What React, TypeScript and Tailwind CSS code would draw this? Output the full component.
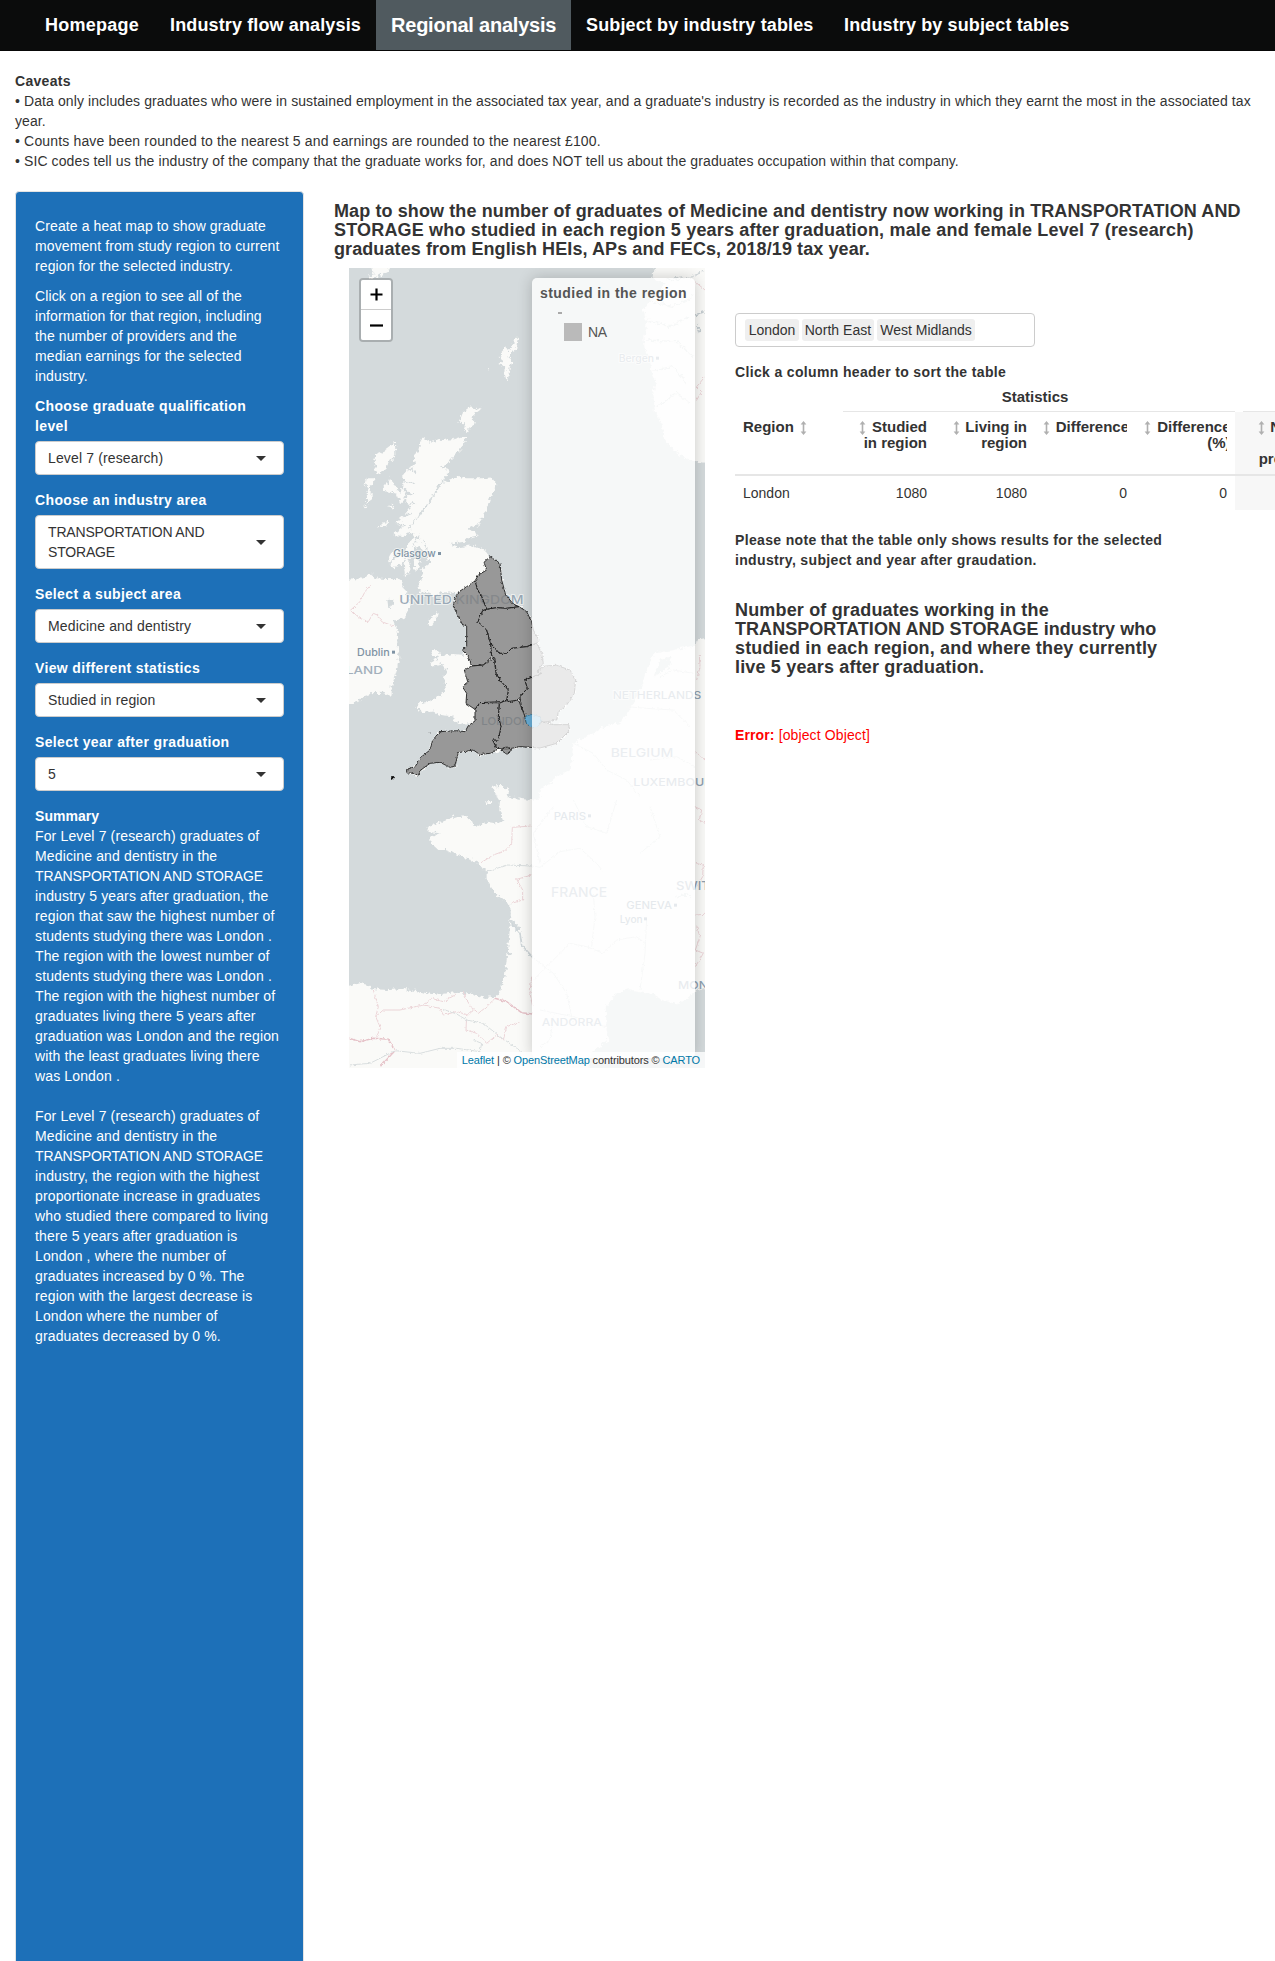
import React from "react";

const LAND =
  "M250,533 L262,540 275,546 300,540 340,538 362,530 380,530 375,552 355,575 335,595 320,612 300,622 330,630 318,650 308,668 330,660 350,650 380,655 430,655 455,652 466,668 464,690 450,715 440,745 430,770 415,792 385,808 405,815 412,830 385,836 372,845 330,852 355,862 400,856 435,872 450,890 480,910 485,960 497,1005 520,1032 540,1040 560,1055 575,1085 580,1110 597,1140 595,1155 605,1180 610,1210 590,1235 615,1218 650,1216 690,1230 707,1260 703,1300 680,1335 655,1355 650,1380 620,1386 640,1394 687,1394 685,1415 665,1435 650,1450 600,1464 540,1460 500,1470 460,1478 420,1488 400,1470 355,1478 345,1520 330,1522 300,1507 270,1510 240,1535 233,1548 215,1540 200,1538 200,1528 225,1520 245,1490 270,1470 278,1440 300,1415 350,1415 375,1412 385,1397 405,1385 390,1394 370,1393 345,1385 337,1369 300,1365 275,1352 250,1358 228,1345 240,1330 265,1325 300,1305 318,1290 312,1250 320,1230 302,1210 275,1218 270,1208 298,1192 276,1185 274,1172 290,1170 310,1188 335,1182 368,1184 378,1170 380,1155 380,1095 368,1095 350,1060 340,1038 345,1015 360,993 340,1000 305,995 275,1012 262,992 242,1000 235,975 250,950 245,930 270,910 262,890 240,865 228,860 212,880 208,905 208,940 195,948 192,920 200,895 178,915 160,925 150,912 190,880 205,850 225,830 213,815 190,828 160,825 190,800 165,790 195,765 212,745 195,715 212,702 190,680 190,640 205,625 225,615 220,590 235,575 240,550Z";
const IRELAND =
  "M-20,960 L50,958 75,950 92,940 108,955 135,957 180,958 190,980 212,1025 205,1055 190,1075 160,1082 170,1110 172,1150 178,1190 170,1230 155,1280 155,1307 130,1298 90,1300 50,1325 -20,1345Z";
const ISLES = [
  "M85,0 L155,0 148,35 130,40 115,52 86,57 84,48 104,42 94,34Z",
  "M535,232 L525,240 512,262 505,272 498,262 485,275 478,290 490,300 475,312 490,318 497,325 495,345 500,364 506,345 510,320 516,305 505,290 520,275 533,265 530,250Z",
  "M385,438 L380,455 368,460 360,480 355,488 375,490 372,508 385,517 390,500 405,490 398,480 400,465 420,450 424,440 400,447Z",
  "M165,546 L150,560 130,575 105,585 103,600 110,620 105,638 120,643 130,630 138,620 150,605 166,585Z",
  "M78,655 L103,655 97,675 87,682 95,692 95,722 82,728 80,700 85,690 75,668Z",
  "M73,740 L82,736 80,747Z",
  "M150,653 L160,665 172,690 180,695 190,685 197,705 190,728 180,728 170,702 150,697 130,692 128,675 145,672Z",
  "M145,733 L160,736 156,746Z",
  "M112,803 L130,788 146,782 140,795Z",
  "M146,895 L160,870 172,872 165,885 150,908Z",
  "M222,900 L232,896 240,915 236,930 222,928Z",
  "M293,1055 L290,1075 276,1095 263,1094 268,1078Z",
  "M442,325 L448,325 447,331 442,331Z",
  "M436,1626 L450,1622 450,1630 440,1632Z",
];
const NORWAY =
  "M960,0 L1140,0 1140,612 1060,605 1025,590 990,560 970,530 965,490 945,460 940,400 950,370 935,340 930,300 915,270 910,230 920,190 910,150 930,120 960,100 975,70 945,60 935,45Z";
const CONTINENT =
  "M1140,1130 L1070,1138 1065,1160 1000,1170 945,1180 930,1210 915,1250 900,1290 870,1350 840,1390 790,1400 760,1420 730,1435 700,1450 692,1530 650,1550 620,1575 595,1595 600,1615 575,1620 540,1616 505,1612 500,1582 480,1578 457,1580 466,1600 480,1622 478,1650 490,1685 465,1690 440,1685 405,1700 390,1680 372,1666 345,1670 300,1688 265,1700 262,1715 300,1720 270,1730 272,1748 295,1770 320,1770 345,1780 375,1795 410,1805 420,1820 440,1830 440,1860 465,1900 490,1920 510,1930 513,1965 505,1980 510,2000 505,2060 495,2140 480,2195 465,2210 440,2214 400,2205 360,2195 330,2198 290,2204 240,2195 190,2186 150,2190 100,2188 85,2175 60,2170 -20,2190 -20,2480 740,2480 750,2380 805,2340 800,2310 797,2240 830,2200 865,2188 930,2200 965,2220 1010,2233 1050,2210 1070,2190 1140,2172Z";
const PINK = [
  "M92,975 L75,995 60,1025 32,1050 60,1075 85,1085 100,1060 112,1065 125,1085 165,1100",
  "M575,1698 L517,1702 515,1750 495,1772 460,1785 420,1810",
  "M575,1845 L530,1858 548,1890 548,1920 515,1930",
  "M100,2190 L115,2240 107,2270 130,2250 180,2250 250,2235 275,2215 310,2225 345,2205",
  "M250,2235 L300,2245 310,2265 350,2255 385,2265 400,2250 380,2220 370,2195",
  "M380,2265 L378,2310 410,2320 440,2350 470,2325 490,2340 500,2300 540,2285",
  "M465,2215 L440,2240 415,2260 400,2245",
  "M107,2270 L120,2300 110,2330",
  "M575,2150 L570,2200 578,2240",
  "M1065,1640 L1085,1650 1078,1680 1095,1690 M1066,1810 L1090,1815 1088,1850 1070,1880 M1066,1965 L1095,1963 M1070,2000 L1080,2030 1066,2070 1090,2080 1066,2120",
  "M1078,1185 L1080,1220 1070,1260 M1066,1475 L1095,1500",
  "M1095,350 L1070,380 1085,395 1070,420 M1065,65 L1095,90",
];
const STRONG_PINK = [
  "M465,2215 L500,2225 520,2240 545,2258 578,2262",
  "M27,2335 L60,2345 100,2335 145,2338 165,2372 120,2420",
];
const RIVERS = [
  "M425,1830 L450,1832 500,1815 575,1818 600,1822 660,1775 720,1765 770,1810 790,1835",
  "M165,2372 L240,2380 300,2365 350,2365 420,2375 425,2350 400,2340",
  "M27,2415 L90,2410 165,2372",
  "M310,2248 L350,2262 380,2280 430,2290 480,2330 545,2375",
  "M600,1810 L580,1720 640,1640 M700,1620 L740,1700 800,1720 830,1620 M930,1640 L960,1730 900,1780",
  "M575,2090 L640,2140 680,2200 700,2290 M580,2160 L640,2100 690,2050 740,2060 790,2080 830,2040 890,2030 915,2050",
  "M760,1900 L765,1970 755,2060 M920,1975 L915,2080 900,2190",
  "M600,2250 L650,2260 700,2270 760,2290 800,2300 M640,2270 L630,2340 600,2360",
  "M700,1450 L760,1480 800,1530 860,1560 900,1610 M860,1340 L920,1345 1000,1350 1050,1400",
  "M960,1250 L1000,1230 1060,1240 M930,1500 L1010,1490 1065,1520",
];
const REGIONS = [
  "M450,890 L480,910 485,960 497,1005 520,1032 537,1040 500,1045 470,1043 440,1048 425,1010 413,990 405,963 415,945 440,930 432,907Z",
  "M405,963 L413,990 425,1010 440,1048 428,1052 414,1085 440,1110 452,1150 455,1190 430,1215 395,1218 385,1190 367,1170 380,1160 380,1095 368,1095 350,1060 340,1038 345,1015 360,993 380,980Z",
  "M428,1052 L440,1048 470,1043 500,1045 537,1040 560,1055 575,1085 580,1110 597,1140 590,1150 560,1160 515,1165 500,1180 478,1180 452,1150 440,1110 414,1085Z",
  "M452,1150 L478,1180 500,1180 515,1165 560,1160 590,1150 605,1180 610,1210 590,1235 605,1240 555,1260 562,1285 540,1310 535,1320 500,1325 505,1290 480,1260 468,1240 465,1195 455,1190Z",
  "M395,1218 L430,1215 462,1192 468,1240 480,1260 505,1290 500,1320 478,1330 420,1328 405,1348 378,1330 380,1300 367,1280 383,1265 373,1230Z",
  "M605,1240 L590,1235 615,1218 650,1216 690,1230 707,1260 703,1300 680,1335 655,1355 650,1380 605,1388 600,1370 560,1370 545,1345 540,1310 562,1285 555,1260Z",
  "M478,1330 L500,1320 510,1328 535,1318 545,1345 555,1370 560,1392 580,1402 600,1390 605,1385 640,1394 687,1394 685,1415 665,1435 650,1450 600,1464 540,1460 500,1468 470,1465 458,1440 475,1440 483,1400 475,1370Z",
  "M405,1348 L420,1328 478,1325 475,1370 483,1400 475,1440 458,1440 470,1465 460,1478 420,1484 400,1470 355,1478 345,1518 330,1522 300,1507 270,1510 240,1532 233,1548 215,1540 200,1538 200,1528 225,1520 245,1490 270,1470 278,1440 300,1415 350,1412 375,1415 385,1397 405,1383Z",
  "M482,1470 L500,1460 515,1470 500,1482Z",
];
const LONDON = "M555,1370 L575,1363 600,1370 606,1380 598,1390 590,1403 575,1402 560,1392Z";

type MapText = { t: string; x: number; y: number; w: number; s: number; c: string; dot?: number };
const PLACES: MapText[] = [
  { t: "Glasgow", x: 160, y: 892, w: 127, s: 29, c: "#7f93a4", dot: 298 },
  { t: "UNITED KINGDOM", x: 178, y: 1032, w: 373, s: 36, c: "#9aa9b7" },
  { t: "Dublin", x: 51, y: 1188, w: 98, s: 29, c: "#7f93a4", dot: 160 },
  { t: "IRELAND", x: -44, y: 1242, w: 173, s: 33, c: "#a3b0bc" },
  { t: "LONDON", x: 424, y: 1396, w: 147, s: 33, c: "#8296a8" },
  { t: "Bergen", x: 836, y: 306, w: 106, s: 29, c: "#8f9fae", dot: 952 },
  { t: "NETHERLANDS", x: 818, y: 1317, w: 266, s: 33, c: "#8fa0b0" },
  { t: "BELGIUM", x: 812, y: 1492, w: 188, s: 35, c: "#9aa9b7" },
  { t: "LUXEMBOURG", x: 880, y: 1578, w: 265, s: 33, c: "#8fa0b0" },
  { t: "PARIS", x: 641, y: 1679, w: 97, s: 31, c: "#8296a8", dot: 748 },
  { t: "FRANCE", x: 633, y: 1910, w: 168, s: 38, c: "#9aa9b7" },
  { t: "SWITZERLAND", x: 1008, y: 1889, w: 285, s: 35, c: "#8fa0b0" },
  { t: "GENEVA", x: 859, y: 1947, w: 137, s: 31, c: "#7f93a4", dot: 1006 },
  { t: "Lyon", x: 839, y: 1988, w: 69, s: 29, c: "#7f93a4", dot: 916 },
  { t: "MONACO", x: 1014, y: 2186, w: 170, s: 33, c: "#8fa0b0" },
  { t: "ANDORRA", x: 605, y: 2298, w: 181, s: 33, c: "#9aa9b7" },
];

function MapCanvas() {
  return (
    <svg className="block h-[800px] w-[356px]" viewBox="27 24 1068 2400">
      <defs>
        <filter id="coast" x="-20" y="0" width="1160" height="2480" filterUnits="userSpaceOnUse">
          <feTurbulence type="fractalNoise" baseFrequency="0.09" numOctaves={3} seed={4} result="n" />
          <feDisplacementMap in="SourceGraphic" in2="n" scale={20} xChannelSelector="R" yChannelSelector="G" />
        </filter>
        <filter id="edge" x="-20" y="0" width="1160" height="2480" filterUnits="userSpaceOnUse">
          <feTurbulence type="fractalNoise" baseFrequency="0.12" numOctaves={2} seed={8} result="n" />
          <feDisplacementMap in="SourceGraphic" in2="n" scale={10} xChannelSelector="R" yChannelSelector="G" />
        </filter>
      </defs>
      <rect x="27" y="24" width="1068" height="2400" fill="#d4dadc" />
      <g filter="url(#coast)">
        <g fill="#fafaf8">
          <path d={LAND} />
          <path d={IRELAND} />
          <path d={NORWAY} />
          <path d={CONTINENT} />
          {ISLES.map((d) => (
            <path key={d} d={d} />
          ))}
        </g>
        <g fill="#d4dadc">
          <path d="M142,1020 L160,1018 158,1038 145,1042Z" />
          <path d="M962,1200 L990,1190 995,1215 960,1240 940,1250Z" />
          <path d="M507,1978 L520,1982 540,2010 530,2010 512,1992Z" />
          <path d="M503,2078 L517,2080 508,2086Z" />
          <path d="M1000,1915 L1030,1900 1060,1908 1030,1908Z" />
        </g>
        <g fill="none" stroke="#d4dadc" strokeWidth={4}>
          <path d="M330,635 L300,675 275,715 235,770 205,805" />
          <path d="M205,625 L228,640 M192,665 L225,672 M195,700 L225,705 M200,735 L225,728 M190,770 L215,760 M165,790 L195,795 M250,840 L262,870 M240,825 L215,860" />
          <path d="M915,120 L1000,140 1060,110 M920,180 L990,200 1050,170 M920,240 L1010,245 1060,290 M940,330 L1000,320 1040,370 M950,440 L1010,400 1050,430 M980,60 L1060,50 1090,30" />
          <path d="M1065,165 L1095,155 M1070,195 L1080,220" stroke="#c5cdd1" />
        </g>
      </g>
      <g filter="url(#edge)" fill="none">
        <g stroke="#ecd5d8" strokeWidth={3}>
          {PINK.map((d) => (
            <path key={d} d={d} />
          ))}
        </g>
        <g stroke="#e6c3c9" strokeWidth={4.5}>
          {STRONG_PINK.map((d) => (
            <path key={d} d={d} />
          ))}
        </g>
        <g stroke="#d9dedf" strokeWidth={3}>
          {RIVERS.map((d) => (
            <path key={d} d={d} />
          ))}
          <path d="M515,1990 L540,2020 545,2055 578,2092" stroke="#cfd6d9" strokeWidth={5} />
        </g>
      </g>
      <g fontFamily="Inter, 'Open Sans', sans-serif" fontWeight={500}>
        {PLACES.map((p) => (
          <g key={p.t} fill={p.c}>
            <text
              x={p.x}
              y={p.y}
              fontSize={p.s}
              textLength={p.w}
              lengthAdjust="spacingAndGlyphs"
              stroke="#fafaf8"
              strokeWidth={5}
              strokeOpacity={0.8}
              paintOrder="stroke"
            >
              {p.t}
            </text>
            {p.dot && <rect x={p.dot - 4} y={p.y - 16} width={9} height={9} />}
          </g>
        ))}
      </g>
      <g filter="url(#edge)" stroke="#1a1a1a" strokeWidth={2.6} strokeLinejoin="round">
        {REGIONS.map((d) => (
          <path key={d} d={d} fill="#808080" fillOpacity={0.8} />
        ))}
        <path d={LONDON} fill="#69afd8" stroke="#3a718f" strokeWidth={2} />
        <path d="M150,1551 L162,1549 157,1557Z M268,1418 L270,1420" fill="#000" />
      </g>
    </svg>
  );
}

function SortArrow({ className = "mr-[1.5px]" }: { className?: string }) {
  return (
    <svg className={"inline-block h-[14px] w-[7px] align-[-3px] " + className} viewBox="0 0 7 14" fill="#b0b0b0">
      <path d="M3.5 0 L6.4 3.4 H4.3 V10.6 H6.4 L3.5 14 L.6 10.6 H2.7 V3.4 H.6Z" />
    </svg>
  );
}

function Field({ label, value, first = false }: { label: React.ReactNode; value: React.ReactNode; first?: boolean }) {
  return (
    <div className={first ? "mt-[10px] mb-[15px]" : "mb-[15px]"}>
      <div className="mb-[5px] font-bold tracking-[0.36px] whitespace-nowrap">{label}</div>
      <div className="flex items-center justify-between rounded-[4px] border border-[#ccc] bg-white py-[6px] pr-[17px] pl-3 text-[#333]">
        <div className="whitespace-nowrap">{value}</div>
        <svg className="h-[5px] w-[10px]" viewBox="0 0 10 5">
          <path d="M0 0H10L5 5Z" fill="#333" />
        </svg>
      </div>
    </div>
  );
}

function Lines({ rows }: { rows: string[] }) {
  return (
    <>
      {rows.map((r, i) => (
        <div
          key={i}
          className={
            r !== "" && r === r.toUpperCase()
              ? "min-h-5 whitespace-pre tracking-[-0.14px]"
              : "min-h-5 whitespace-pre"
          }
        >
          {r}
        </div>
      ))}
    </>
  );
}

const SUMMARY = [
  "For Level 7 (research) graduates of",
  "Medicine and dentistry in the",
  "TRANSPORTATION AND STORAGE",
  "industry 5 years after graduation, the",
  "region that saw the highest number of",
  "students studying there was London .",
  "The region with the lowest number of",
  "students studying there was London .",
  "The region with the highest number of",
  "graduates living there 5 years after",
  "graduation was London and the region",
  "with the least graduates living there",
  "was London .",
  "",
  "For Level 7 (research) graduates of",
  "Medicine and dentistry in the",
  "TRANSPORTATION AND STORAGE",
  "industry, the region with the highest",
  "proportionate increase in graduates",
  "who studied there compared to living",
  "there 5 years after graduation is",
  "London , where the number of",
  "graduates increased by 0 %. The",
  "region with the largest decrease is",
  "London where the number of",
  "graduates decreased by 0 %.",
];

function Sidebar() {
  return (
    <aside className="h-[1800px] w-[289px] shrink-0 rounded-[4px] border border-[#e3e3e3] bg-[#1d70b8] px-[19px] pt-[24px] text-white tracking-[0.14px]">
      <div className="tracking-[0.11px]">
        <Lines
          rows={[
            "Create a heat map to show graduate",
            "movement from study region to current",
            "region for the selected industry.",
          ]}
        />
        <div className="h-[10px]" />
        <Lines
          rows={[
            "Click on a region to see all of the",
            "information for that region, including",
            "the number of providers and the",
            "median earnings for the selected",
            "industry.",
          ]}
        />
      </div>
      <Field
        first
        label={
          <>
            Choose graduate qualification
            <br />
            level
          </>
        }
        value="Level 7 (research)"
      />
      <Field
        label="Choose an industry area"
        value={
          <div className="tracking-[-0.17px]">
            TRANSPORTATION AND
            <br />
            STORAGE
          </div>
        }
      />
      <Field label="Select a subject area" value="Medicine and dentistry" />
      <Field label="View different statistics" value="Studied in region" />
      <Field label="Select year after graduation" value="5" />
      <div className="font-bold tracking-[0.05px]">Summary</div>
      <Lines rows={SUMMARY} />
    </aside>
  );
}

function MapPanel() {
  return (
    <div className="relative ml-[15px] h-[800px] w-[356px] shrink-0 overflow-hidden">
      <MapCanvas />
      <div className="absolute top-[10px] left-[10px] w-[34px] rounded-[4px] border-2 border-black/20 bg-clip-padding text-center font-bold text-black">
        <div className="flex h-[30px] items-center justify-center rounded-t-[2px] border-b border-[#ccc] bg-white">
          <svg className="h-[13px] w-[13px]" viewBox="0 0 13 13">
            <path d="M6.5 0.5V12.5M0.5 6.5H12.5" stroke="#000" strokeWidth="2.2" />
          </svg>
        </div>
        <div className="flex h-[30px] items-center justify-center rounded-b-[2px] bg-white">
          <svg className="h-[13px] w-[13px]" viewBox="0 0 13 13">
            <path d="M0 6.5H13" stroke="#000" strokeWidth="2.2" />
          </svg>
        </div>
      </div>
      <div className="absolute top-[10px] left-[183px] h-[780px] w-[163px] rounded-[5px] bg-white/80 px-2 pt-[6px] text-[#555] shadow-[0_0_15px_rgba(0,0,0,0.2)]">
        <div className="font-bold whitespace-nowrap leading-[18px] tracking-[0.45px]">studied in the region</div>
        <div className="mt-[10px] ml-[18px] h-[2px] w-1 bg-[#aaa]" />
        <div className="mt-[9px] ml-6 flex items-center gap-[6px] leading-[18px] tracking-[-0.3px]">
          <div className="h-[18px] w-[18px] bg-[#bababa]" />
          NA
        </div>
      </div>
      <div className="absolute right-0 bottom-0 h-4 bg-white/80 px-[5px] text-[11px] leading-4 tracking-[-0.12px] whitespace-nowrap text-[#333]">
        <span className="text-[#0078a8]">Leaflet</span> | © <span className="text-[#0078a8]">OpenStreetMap</span>{" "}
        contributors © <span className="text-[#0078a8]">CARTO</span>
      </div>
    </div>
  );
}

function RegionTable() {
  const head = "h-[62px] w-[100px] shrink-0 px-2 pt-[7px] text-[15px] leading-4 font-bold whitespace-nowrap";
  const cell = "h-[34px] w-[100px] shrink-0 px-2 py-[7px] text-right";
  return (
    <div className="w-[600px]">
      <div className="flex h-[30px]">
        <div className="w-[100px]" />
        <div className="ml-2 w-[392px] border-b border-[#e6e6e6]">
          <div className="-ml-2 pt-[5px] text-center text-[15px] font-bold">Statistics</div>
        </div>
        <div className="ml-2 w-[92px] border-b border-[#e6e6e6]" />
      </div>
      <div className="flex border-b-2 border-[#e6e6e6]">
        <div className={head}>
          Region <SortArrow className="ml-[1.5px]" />
        </div>
        <div className={head + " text-right"}>
          <SortArrow /> Studied
          <br />
          in region
        </div>
        <div className={head + " text-right"}>
          <SortArrow /> Living in
          <br />
          region
        </div>
        <div className={head}>
          <div className="h-full overflow-hidden">
            <SortArrow /> Difference
          </div>
        </div>
        <div className={head}>
          <div className="h-full overflow-hidden">
            <div className="w-[87.5px] text-right">
              <SortArrow /> Difference
              <br />
              (%)
            </div>
          </div>
        </div>
        <div className={head + " bg-[#f7f7f7] text-right"}>
          <SortArrow /> Number
          <br />
          of
          <br />
          providers
        </div>
      </div>
      <div className="flex">
        <div className="h-[34px] w-[100px] px-2 py-[7px]">London</div>
        <div className={cell}>1080</div>
        <div className={cell}>1080</div>
        <div className={cell}>0</div>
        <div className={cell}>0</div>
        <div className={cell + " bg-[#f7f7f7]"} />
      </div>
    </div>
  );
}

export default function App() {
  return (
    <div className="h-[1961px] w-[1275px] overflow-hidden bg-white font-['Liberation_Sans',Arial,sans-serif] text-[14px] leading-5 text-[#333]">
      <nav className="flex h-[51px] border-b border-[#080808] bg-[#0b0c0c] pl-[30px] text-[18px] leading-[50px] font-bold tracking-[0.13px] whitespace-nowrap text-white">
        <div className="w-[125px] pl-[15px] tracking-[0.25px]">Homepage</div>
        <div className="w-[221px] pl-[15px]">Industry flow analysis</div>
        <div className="w-[195px] bg-[#505a5f] pl-[15px] text-[20px] tracking-[-0.22px]">Regional analysis</div>
        <div className="w-[258px] pl-[15px]">Subject by industry tables</div>
        <div className="pl-[15px]">Industry by subject tables</div>
      </nav>
      <div className="mx-[15px] mt-5 tracking-[0.1px] whitespace-nowrap">
        <div className="font-bold tracking-[0.3px]">Caveats</div>
        <div>
          • Data only includes graduates who were in sustained employment in the associated tax year, and a graduate's
          industry is recorded as the industry in which they earnt the most in the associated tax
        </div>
        <div>year.</div>
        <div className="tracking-[0.16px]">
          • Counts have been rounded to the nearest 5 and earnings are rounded to the nearest £100.
        </div>
        <div>
          • SIC codes tell us the industry of the company that the graduate works for, and does NOT tell us about the
          graduates occupation within that company.
        </div>
      </div>
      <div className="mt-5 flex pl-[15px]">
        <Sidebar />
        <main className="ml-[30px] w-[941px] shrink-0 pt-[11px]">
          <h4 className="h-[66px] text-[18px] leading-[19px] font-bold whitespace-nowrap">
            <div className="tracking-[0.105px]">
              Map to show the number of graduates of Medicine and dentistry now working in TRANSPORTATION AND
            </div>
            <div className="tracking-[0.175px]">
              STORAGE who studied in each region 5 years after graduation, male and female Level 7 (research)
            </div>
            <div className="tracking-[0.09px]">graduates from English HEIs, APs and FECs, 2018/19 tax year.</div>
          </h4>
          <div className="flex">
            <MapPanel />
            <div className="ml-[30px] w-[540px] shrink-0 pt-[45px]">
              <div className="flex h-[34px] w-[300px] items-center gap-[3px] rounded-[4px] border border-[#ccc] pl-[9px] text-center whitespace-nowrap">
                <span className="w-[54px] rounded-[3px] bg-[#efefef] py-px">London</span>
                <span className="w-[72px] rounded-[3px] bg-[#efefef] py-px tracking-[0.05px]">North East</span>
                <span className="w-[98px] rounded-[3px] bg-[#efefef] py-px">West Midlands</span>
              </div>
              <div className="mt-[15px] h-5 font-bold tracking-[0.35px]">Click a column header to sort the table</div>
              <RegionTable />
              <div className="mt-5 font-bold tracking-[0.34px] whitespace-nowrap">
                Please note that the table only shows results for the selected
                <br />
                industry, subject and year after graudation.
              </div>
              <h4 className="mt-[31px] text-[18px] leading-[19px] font-bold tracking-[0.17px] whitespace-nowrap">
                Number of graduates working in the
                <br />
                <span className="tracking-[0.05px]">TRANSPORTATION AND STORAGE industry who</span>
                <br />
                studied in each region, and where they currently
                <br />
                live 5 years after graduation.
              </h4>
              <div className="mt-[48px] tracking-[0.12px] text-[#ff0000]">
                <b>Error:</b> [object Object]
              </div>
            </div>
          </div>
        </main>
      </div>
    </div>
  );
}
